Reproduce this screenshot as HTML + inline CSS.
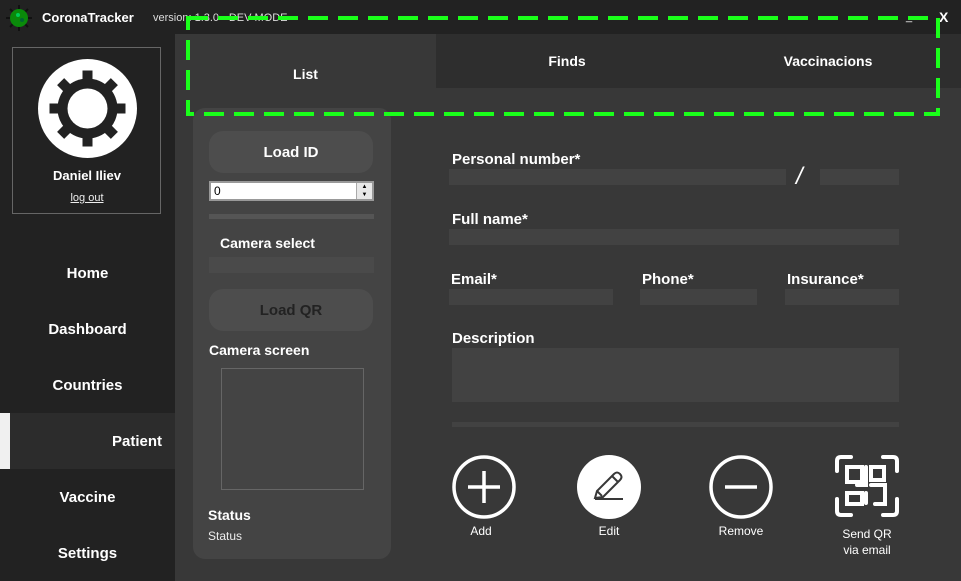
<!DOCTYPE html>
<html><head><meta charset="utf-8"><style>
*{margin:0;padding:0;box-sizing:border-box}
body{width:961px;height:581px;overflow:hidden;background:#383838;font-family:"Liberation Sans","DejaVu Sans",sans-serif;color:#fff;position:relative}
.a{position:absolute}
.b{font-weight:bold;font-size:15px}
.f{position:absolute;background:#424242}
.nav{position:absolute;left:0;width:175px;text-align:center;font-weight:bold;font-size:15px}
</style></head><body>
<div class="a" style="left:0;top:0;width:961px;height:34px;background:#222"></div>
<div class="a" style="left:0;top:34px;width:175px;height:547px;background:#222"></div>
<svg class="a" style="left:5px;top:4px" width="28" height="28" viewBox="0 0 28 28">
<g stroke="#111" stroke-width="2"><line x1="14" y1="1" x2="14" y2="27"/><line x1="1" y1="14" x2="27" y2="14"/><line x1="5" y1="5" x2="23" y2="23"/><line x1="23" y1="5" x2="5" y2="23"/></g>
<circle cx="14" cy="14" r="9" fill="#0a8a0a"/><circle cx="13" cy="11" r="2" fill="#0c5"/><circle cx="17" cy="16" r="2" fill="#063"/></svg>
<div class="a b" style="left:42px;top:10px;font-size:13px">CoronaTracker</div>
<div class="a" style="left:153px;top:12px;font-size:11px;color:#ddd">version: 1.3.0 - DEV MODE</div>
<div class="a" style="left:906px;top:11px;font-size:11px">_</div>
<div class="a b" style="left:939px;top:9px;font-size:14px">X</div>

<div class="a" style="left:12px;top:47px;width:149px;height:167px;border:1px solid #666"></div>
<svg class="a" style="left:38px;top:59px" width="99" height="99" viewBox="0 0 99 99">
<circle cx="49.5" cy="49.5" r="49.5" fill="#fff"/>
<g fill="#222" transform="translate(49.5 49.5)">
<rect x="-5" y="-38" width="10" height="76"/><rect x="-38" y="-5" width="76" height="10"/>
<rect x="-5" y="-38" width="10" height="76" transform="rotate(45)"/><rect x="-5" y="-38" width="10" height="76" transform="rotate(-45)"/>
<circle r="30"/></g>
<circle cx="49.5" cy="49.5" r="20" fill="#fff"/></svg>
<div class="a b" style="left:12px;top:168px;width:150px;text-align:center;font-size:13px">Daniel Iliev</div>
<div class="a" style="left:12px;top:192px;width:150px;text-align:center;font-size:11px;text-decoration:underline;color:#eee">log out</div>

<div class="nav" style="top:265px">Home</div>
<div class="nav" style="top:321px">Dashboard</div>
<div class="nav" style="top:377px">Countries</div>
<div class="a" style="left:0;top:413px;width:175px;height:56px;background:#2c2c2c"></div>
<div class="a" style="left:0;top:413px;width:10px;height:56px;background:#f0f0f0"></div>
<div class="a b" style="left:112px;top:433px">Patient</div>
<div class="nav" style="top:489px">Vaccine</div>
<div class="nav" style="top:545px">Settings</div>

<div class="a" style="left:436px;top:34px;width:525px;height:54px;background:#2e2e2e"></div>
<div class="a b" style="left:175px;top:66px;width:261px;text-align:center;font-size:14px">List</div>
<div class="a b" style="left:436px;top:53px;width:262px;text-align:center;font-size:14px">Finds</div>
<div class="a b" style="left:698px;top:53px;width:260px;text-align:center;font-size:14px">Vaccinacions</div>

<div class="a" style="left:193px;top:108px;width:198px;height:451px;background:#444;border-radius:12px"></div>
<div class="a b" style="left:209px;top:131px;width:164px;height:42px;background:#4d4d4d;border-radius:14px;text-align:center;line-height:44px">Load ID</div>
<div class="a" style="left:209px;top:181px;width:165px;height:20px;background:#fff;border:2px solid #999;color:#000;font-size:12px;padding-left:3px;line-height:16px">0</div>
<div class="a" style="left:356px;top:183px;width:16px;height:16px;background:#e8e8e8;border-left:1px solid #aaa;font-size:6px;color:#000;text-align:center;line-height:8px">▲<br>▼</div>
<div class="a" style="left:209px;top:214px;width:165px;height:5px;background:#555"></div>
<div class="a b" style="left:220px;top:235px;font-size:14px">Camera select</div>
<div class="a" style="left:209px;top:257px;width:165px;height:16px;background:#4a4a4a"></div>
<div class="a b" style="left:209px;top:289px;width:164px;height:42px;background:#4d4d4d;border-radius:14px;text-align:center;line-height:44px;color:#222">Load QR</div>
<div class="a b" style="left:209px;top:342px;font-size:14px">Camera screen</div>
<div class="a" style="left:221px;top:368px;width:143px;height:122px;border:1px solid #666"></div>
<div class="a b" style="left:208px;top:507px;font-size:14px">Status</div>
<div class="a" style="left:208px;top:529px;font-size:12px;color:#eee">Status</div>

<div class="a b" style="left:452px;top:151px">Personal number*</div>
<div class="f" style="left:449px;top:169px;width:337px;height:16px"></div>
<div class="a b" style="left:796px;top:163px;font-size:24px;font-style:italic;font-weight:normal">/</div>
<div class="f" style="left:820px;top:169px;width:79px;height:16px"></div>
<div class="a b" style="left:452px;top:211px">Full name*</div>
<div class="f" style="left:449px;top:229px;width:450px;height:16px"></div>
<div class="a b" style="left:451px;top:271px">Email*</div>
<div class="f" style="left:449px;top:289px;width:164px;height:16px"></div>
<div class="a b" style="left:642px;top:271px">Phone*</div>
<div class="f" style="left:640px;top:289px;width:117px;height:16px"></div>
<div class="a b" style="left:787px;top:271px">Insurance*</div>
<div class="f" style="left:785px;top:289px;width:114px;height:16px"></div>
<div class="a b" style="left:452px;top:330px">Description</div>
<div class="f" style="left:452px;top:348px;width:447px;height:54px"></div>
<div class="f" style="left:452px;top:422px;width:447px;height:5px"></div>

<svg class="a" style="left:450px;top:454px" width="70" height="66" viewBox="0 0 70 66"><circle cx="34" cy="33" r="30" fill="none" stroke="#fff" stroke-width="3.5"/><path d="M34 17V49M18 33H50" stroke="#fff" stroke-width="3.5"/></svg>
<svg class="a" style="left:576px;top:454px" width="66" height="66" viewBox="0 0 66 66"><circle cx="33" cy="33" r="32" fill="#fff"/><path d="M19 44L21 37L38 20Q41 17 44 20Q47 23 44 26L27 43Z M36 22L42 28 M21 37L26 42 M19 45H47" fill="none" stroke="#383838" stroke-width="2"/></svg>
<svg class="a" style="left:708px;top:454px" width="66" height="66" viewBox="0 0 66 66"><circle cx="33" cy="33" r="30" fill="none" stroke="#fff" stroke-width="3.5"/><path d="M17 33H49" stroke="#fff" stroke-width="3.5"/></svg>
<svg class="a" style="left:835px;top:455px" width="65" height="64" viewBox="0 0 65 64" fill="none" stroke="#fff" stroke-width="4" stroke-linecap="round">
<path d="M2 16V6Q2 2 6 2H16M48 2H58Q62 2 62 6V16M62 44V56Q62 60 58 60H48M16 60H6Q2 60 2 56V44"/>
<rect x="12" y="12" width="15" height="15"/><rect x="36" y="12" width="13" height="13"/><rect x="12" y="38" width="15" height="11"/>
<path d="M31 12V30H22M36 30H50V49H40M31 38V48"/></svg>
<div class="a" style="left:450px;top:524px;width:62px;text-align:center;font-size:12px">Add</div>
<div class="a" style="left:578px;top:524px;width:62px;text-align:center;font-size:12px">Edit</div>
<div class="a" style="left:706px;top:524px;width:70px;text-align:center;font-size:12px">Remove</div>
<div class="a" style="left:826px;top:526px;width:82px;text-align:center;font-size:12px;line-height:16px">Send QR<br>via email</div>

<svg class="a" style="left:186px;top:16px" width="754" height="100"><rect x="2" y="2" width="750" height="96" fill="none" stroke="#1aff1a" stroke-width="4" stroke-dasharray="20 10"/></svg>
</body></html>
